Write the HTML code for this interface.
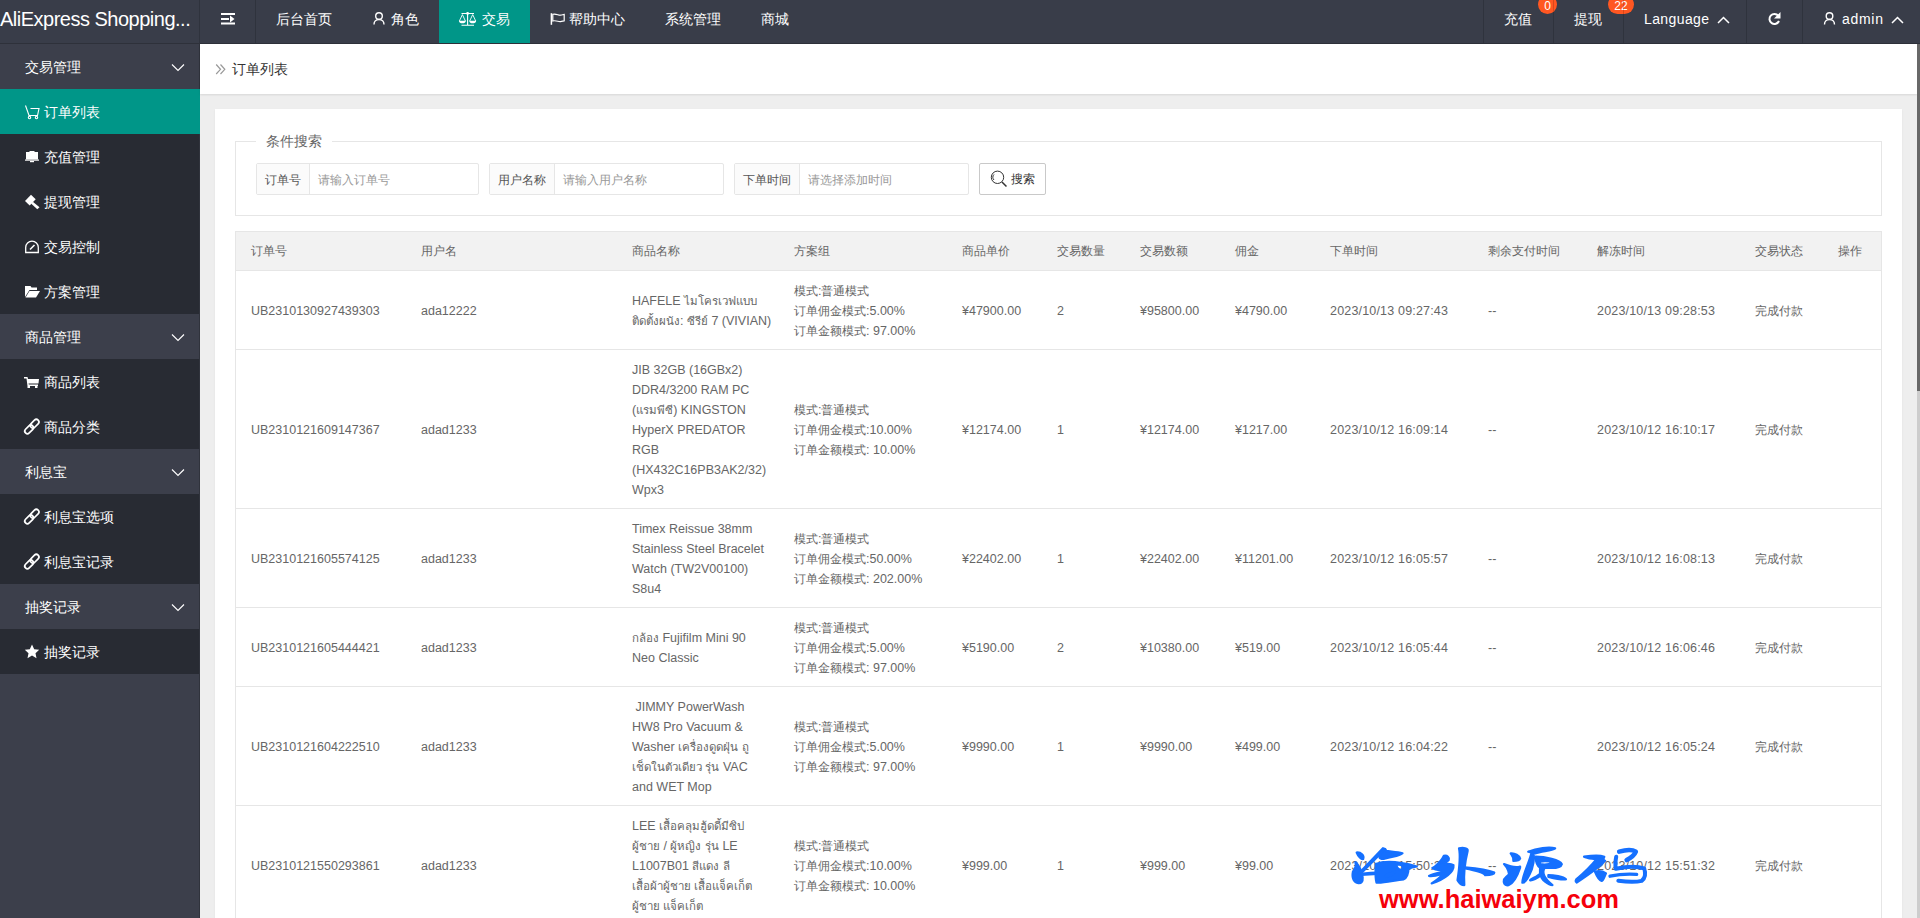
<!DOCTYPE html>
<html><head><meta charset="utf-8"><title>订单列表</title>
<style>
*{margin:0;padding:0;box-sizing:border-box}
html,body{width:1920px;height:918px;overflow:hidden;background:#eeeeee;font-family:"Liberation Sans",sans-serif;font-size:14px;color:#666;position:relative}
.a{position:absolute}
svg{position:absolute;overflow:visible}
.hd{position:absolute;left:0;top:0;width:1920px;height:44px;background:#393D49;border-bottom:1px solid #2e313a}
.logo{position:absolute;left:0;top:0;width:199px;height:43px;line-height:38px;font-size:20px;color:#fff;white-space:nowrap;overflow:hidden;letter-spacing:-0.5px}
.sep{position:absolute;top:0;width:1px;height:43px;background:rgba(0,0,0,.16)}
.it{position:absolute;top:0;height:43px;line-height:38px;white-space:nowrap;color:#fff;font-size:14px}
.act{position:absolute;left:439px;top:0;width:91px;height:43px;background:#009688}
.badge{position:absolute;top:-5px;height:19px;line-height:19px;border-radius:10px;background:#FF5722;color:#fff;font-size:12px;text-align:center;line-height:23px}
.side{position:absolute;left:0;top:44px;width:199px;height:874px;background:#3c3f4b}
.sline{position:absolute;left:199px;top:44px;width:1px;height:874px;background:#30333c}
.g,.s{position:absolute;left:0;width:199px;height:45px;line-height:46px;color:#fff;white-space:nowrap}
.g{padding-left:25px;background:#3c3f4b}
.s{padding-left:44px;background:#282B33}
.on{background:#009688;width:200px}
.bc{position:absolute;left:200px;top:44px;width:1717px;height:50px;background:#fff;box-shadow:0 1px 2px rgba(0,0,0,.10)}
.card{position:absolute;left:215px;top:109px;width:1687px;height:809px;background:#fff;box-shadow:0 1px 2px 0 rgba(0,0,0,.06)}
.fs{position:absolute;left:235px;top:141px;width:1647px;height:75px;border:1px solid #e6e6e6}
.lgbg{position:absolute;left:256px;top:132px;width:76px;height:18px;background:#fff}
.lg{position:absolute;left:266px;top:131px;line-height:20px;font-size:14px;color:#666;white-space:nowrap}
.ig{position:absolute;top:163px;height:32px;border:1px solid #e6e6e6;border-radius:2px;background:#fff}
.lb{position:absolute;left:0;top:0;height:30px;line-height:32px;background:#FBFBFB;border-right:1px solid #e6e6e6;color:#555;font-size:12px;text-align:center;white-space:nowrap}
.ph{position:absolute;top:0;height:30px;line-height:32px;color:#999;font-size:12px;white-space:nowrap}
.btn{position:absolute;left:979px;top:163px;width:67px;height:32px;border:1px solid #c9c9c9;border-radius:2px;background:#fff}
.btxt{position:absolute;left:1011px;top:170px;line-height:18px;font-size:12px;color:#333;white-space:nowrap}
.tframe{position:absolute;left:235px;top:231px;width:1647px;height:700px;border:1px solid #e6e6e6}
.thead{position:absolute;left:236px;top:232px;width:1645px;height:39px;background:#f2f2f2;border-bottom:1px solid #e6e6e6}
.th{position:absolute;top:241px;line-height:20px;font-size:12px;color:#666;white-space:nowrap}
.rowline{position:absolute;left:236px;width:1645px;height:1px;background:#e6e6e6}
.td{position:absolute;font-size:12.5px;color:#666;white-space:nowrap}
.td div{height:20px;line-height:20px}
.c{font-size:12px}
.sb{position:absolute;left:1917px;top:44px;width:3px;height:874px;background:#cdcdcd}
.sbt{position:absolute;left:1917px;top:44px;width:3px;height:347px;background:#686868}
.wm1{position:absolute;left:1349px;top:836px;font-size:46px;line-height:56px;color:#1a6cff;font-weight:bold;letter-spacing:32px;white-space:nowrap;transform:skewX(-12deg)}
.wm2{position:absolute;left:1379px;top:884px;font-size:25.5px;line-height:30px;color:#f5000a;font-weight:bold;white-space:nowrap}
.t{font-size:11.5px}
.dt{letter-spacing:0.18px}

</style></head><body>
<div class="hd"></div>
<div class="logo">AliExpress Shopping...</div>
<div class="sep" style="left:199px"></div>
<svg style="left:0;top:0" width="1" height="1"><g fill="#fff"><rect x="221" y="13" width="14" height="2"/><rect x="221" y="18" width="8" height="2"/><path d="M230 15.5 L234.5 19 L230 22.5Z"/><rect x="221" y="22.5" width="14" height="2"/></g></svg>
<div class="sep" style="left:255px"></div>
<div class="it" style="left:276px">后台首页</div>
<svg style="left:0;top:0" width="1" height="1"><g fill="none" stroke="#fff" stroke-width="1.4"><circle cx="379" cy="16" r="3.3"/><path d="M374 24.5 C374 21.5 376 19.6 379 19.6 C382 19.6 384 21.5 384 24.5"/></g></svg>
<div class="it" style="left:391px">角色</div>
<div class="act"></div>
<svg style="left:0;top:0" width="1" height="1"><g fill="none" stroke="#fff" stroke-width="1.1"><path d="M461.5 13.5 H474 M467.6 13.5 V25.3 M461.5 25.3 H474"/><path d="M462.4 14.6 L459.4 21 M462.4 14.6 L465.4 21 M472.7 14.6 L469.7 21 M472.7 14.6 L475.7 21" stroke-width="0.9"/></g><g fill="#fff"><path d="M458.9 20.7 H465.9 C465.7 22.6 464.3 23.3 462.4 23.3 C460.5 23.3 459.1 22.6 458.9 20.7Z M469.2 20.7 H476.2 C476 22.6 474.6 23.3 472.7 23.3 C470.8 23.3 469.4 22.6 469.2 20.7Z"/><circle cx="467.6" cy="13.4" r="1.4"/></g></svg>
<div class="it" style="left:482px">交易</div>
<svg style="left:0;top:0" width="1" height="1"><g fill="none" stroke="#fff"><path d="M551.4 13.2 V24.8" stroke-width="1.5"/><path d="M552.8 14.3 C556 13.2 558.5 15.6 560.5 15.2 C562 15 563 14.6 564.2 14.4 V20.8 C563 21 562 21.4 560.5 21.6 C558.5 22 556 20 552.8 21Z" stroke-width="1.2"/></g></svg>
<div class="it" style="left:569px">帮助中心</div>
<div class="it" style="left:665px">系统管理</div>
<div class="it" style="left:761px">商城</div>
<div class="sep" style="left:1483px"></div>
<div class="it" style="left:1504px">充值</div>
<div class="badge" style="left:1538px;width:19px">0</div>
<div class="sep" style="left:1553px"></div>
<div class="it" style="left:1574px">提现</div>
<div class="badge" style="left:1608px;width:26px">22</div>
<div class="sep" style="left:1623px"></div>
<div class="it" style="left:1644px;letter-spacing:0.4px">Language</div>
<svg style="left:0;top:0" width="1" height="1"><path d="M1718 23 L1723.5 17.5 L1729 23" fill="none" stroke="#fff" stroke-width="1.5"/></svg>
<div class="sep" style="left:1746px"></div>
<svg style="left:0;top:0" width="1" height="1"><path d="M1778.3 15.7 A5 5 0 1 0 1779 21" fill="none" stroke="#fff" stroke-width="2"/><path d="M1780.5 12 V18.5 H1774Z" fill="#fff"/></svg>
<div class="sep" style="left:1802px"></div>
<svg style="left:0;top:0" width="1" height="1"><g fill="none" stroke="#fff" stroke-width="1.4"><circle cx="1829.5" cy="16" r="3.3"/><path d="M1824.5 24.5 C1824.5 21.5 1826.5 19.6 1829.5 19.6 C1832.5 19.6 1834.5 21.5 1834.5 24.5"/></g></svg>
<div class="it" style="left:1842px;letter-spacing:0.7px">admin</div>
<svg style="left:0;top:0" width="1" height="1"><path d="M1892 23 L1897.5 17.5 L1903 23" fill="none" stroke="#fff" stroke-width="1.5"/></svg>

<div class="side"></div>
<div class="sline"></div>
<div class="g" style="top:44px">交易管理</div>
<div class="s on" style="top:89px">订单列表</div>
<div class="s" style="top:134px">充值管理</div>
<div class="s" style="top:179px">提现管理</div>
<div class="s" style="top:224px">交易控制</div>
<div class="s" style="top:269px">方案管理</div>
<div class="g" style="top:314px">商品管理</div>
<div class="s" style="top:359px">商品列表</div>
<div class="s" style="top:404px">商品分类</div>
<div class="g" style="top:449px">利息宝</div>
<div class="s" style="top:494px">利息宝选项</div>
<div class="s" style="top:539px">利息宝记录</div>
<div class="g" style="top:584px">抽奖记录</div>
<div class="s" style="top:629px">抽奖记录</div>
<svg style="left:0;top:0" width="1" height="1">
<g fill="none" stroke="#fff" stroke-width="1.15">
<path d="M172 64.5 L178 70.5 L184 64.5"/><path d="M172 334.5 L178 340.5 L184 334.5"/><path d="M172 469.5 L178 475.5 L184 469.5"/><path d="M172 604.5 L178 610.5 L184 604.5"/>
</g>
<g fill="none" stroke="#fff" stroke-width="1.1"><path d="M25.5 105.5 L29 115.5 H37.5 L39 108.5 H30.5"/><circle cx="29.5" cy="117.5" r="1.2"/><circle cx="36.5" cy="117.5" r="1.2"/></g>
<g fill="#fff"><path d="M26 152 H29.5 V151 H34.5 V152 H38 V159.5 H26Z"/><rect x="25" y="159.5" width="14" height="1.2"/><rect x="30" y="161" width="4" height="1.2"/></g>
<g fill="#fff"><path d="M31 194.7 L35.7 199.2 L29.7 205.4 L25 201Z"/><path d="M32.8 201.8 L39.5 207.2 L37.3 209.3 L31 203.6Z"/></g>
<g fill="none" stroke="#fff" stroke-width="1.3"><path d="M25.7 252.5 V247.5 A6.3 6.3 0 0 1 38.3 247.5 V252.5 Z"/><path d="M30 249.5 L34.5 245" stroke-width="1.6"/></g>
<g fill="#fff"><path d="M25 286 H30.5 L31.5 287.5 H37 V290 H29.5 L25 297Z"/><path d="M29.5 291 H40 L36 297.5 H25.5Z"/></g>
<g fill="#fff"><path d="M24 377 H27.5 L28 379 H39 L38.5 383.5 H28.5 L28.8 384.5 H38 V386 H27.5 L26.5 378.5 H24Z"/><rect x="27.5" y="386" width="2.5" height="2"/><rect x="35" y="386" width="2.5" height="2"/></g>
<g fill="none" stroke="#fff" stroke-width="1.7"><rect x="-2.6" y="-5" width="5.2" height="10" rx="2.6" transform="translate(34.6 423.7) rotate(45)"/><rect x="-2.6" y="-5" width="5.2" height="10" rx="2.6" transform="translate(29.1 429.4) rotate(45)"/></g>
<g fill="none" stroke="#fff" stroke-width="1.7"><rect x="-2.6" y="-5" width="5.2" height="10" rx="2.6" transform="translate(34.6 513.7) rotate(45)"/><rect x="-2.6" y="-5" width="5.2" height="10" rx="2.6" transform="translate(29.1 519.4) rotate(45)"/></g>
<g fill="none" stroke="#fff" stroke-width="1.7"><rect x="-2.6" y="-5" width="5.2" height="10" rx="2.6" transform="translate(34.6 558.7) rotate(45)"/><rect x="-2.6" y="-5" width="5.2" height="10" rx="2.6" transform="translate(29.1 564.4) rotate(45)"/></g>
<path fill="#fff" d="M32 644.5 L34.2 649.3 L39.2 649.8 L35.5 653.2 L36.5 658.2 L32 655.6 L27.5 658.2 L28.5 653.2 L24.8 649.8 L29.8 649.3Z"/>
</svg>

<div class="card"></div>
<div class="bc"></div>
<svg style="left:0;top:0" width="1" height="1"><g fill="none" stroke="#999" stroke-width="1.2"><path d="M216.2 64.5 L220.5 69.3 L216.2 74"/><path d="M220.5 64.5 L224.8 69.3 L220.5 74"/></g></svg>
<div class="a" style="left:232px;top:59px;line-height:20px;font-size:14px;color:#333;white-space:nowrap">订单列表</div>

<div class="fs"></div>
<div class="lgbg"></div>
<div class="lg">条件搜索</div>
<div class="ig" style="left:256px;width:223px"><div class="lb" style="width:53px">订单号</div><div class="ph" style="left:61px">请输入订单号</div></div>
<div class="ig" style="left:489px;width:235px"><div class="lb" style="width:65px">用户名称</div><div class="ph" style="left:73px">请输入用户名称</div></div>
<div class="ig" style="left:734px;width:235px"><div class="lb" style="width:65px">下单时间</div><div class="ph" style="left:73px">请选择添加时间</div></div>
<div class="btn"></div>
<svg style="left:0;top:0" width="1" height="1"><g fill="none" stroke="#333" stroke-width="1"><circle cx="997.5" cy="177.3" r="6.2"/><path d="M1002 182 L1006.5 186.5" stroke-width="1.5"/><path d="M994 174.5 A3.8 3.8 0 0 0 994 180"/></g></svg>
<div class="btxt">搜索</div>

<div class="sb"></div><div class="sbt"></div>

<div class="tframe"></div><div class="thead"></div><div class="th" style="left:251px">订单号</div><div class="th" style="left:421px">用户名</div><div class="th" style="left:632px">商品名称</div><div class="th" style="left:794px">方案组</div><div class="th" style="left:962px">商品单价</div><div class="th" style="left:1057px">交易数量</div><div class="th" style="left:1140px">交易数额</div><div class="th" style="left:1235px">佣金</div><div class="th" style="left:1330px">下单时间</div><div class="th" style="left:1488px">剩余支付时间</div><div class="th" style="left:1597px">解冻时间</div><div class="th" style="left:1755px">交易状态</div><div class="th" style="left:1838px">操作</div><div class="rowline" style="top:349px"></div><div class="td" style="left:251px;top:301px"><div>UB2310130927439303</div></div><div class="td" style="left:421px;top:301px"><div>ada12222</div></div><div class="td" style="left:632px;top:291px"><div>HAFELE <span class="t">ไมโครเวฟแบบ</span></div><div><span class="t">ติดตั้งผนัง</span>: <span class="t">ซีรีย์</span> 7 (VIVIAN)</div></div><div class="td" style="left:794px;top:281px"><div><span class="c">模式</span>:<span class="c">普通模式</span></div><div><span class="c">订单佣金模式</span>:5.00%</div><div><span class="c">订单金额模式</span>: 97.00%</div></div><div class="td" style="left:962px;top:301px"><div>¥47900.00</div></div><div class="td" style="left:1057px;top:301px"><div>2</div></div><div class="td" style="left:1140px;top:301px"><div>¥95800.00</div></div><div class="td" style="left:1235px;top:301px"><div>¥4790.00</div></div><div class="td" style="left:1330px;top:301px"><div class="dt">2023/10/13 09:27:43</div></div><div class="td" style="left:1488px;top:301px"><div>--</div></div><div class="td" style="left:1597px;top:301px"><div class="dt">2023/10/13 09:28:53</div></div><div class="td" style="left:1755px;top:301px"><div><span class="c">完成付款</span></div></div><div class="td" style="left:1838px;top:301px"><div></div></div><div class="rowline" style="top:508px"></div><div class="td" style="left:251px;top:420px"><div>UB2310121609147367</div></div><div class="td" style="left:421px;top:420px"><div>adad1233</div></div><div class="td" style="left:632px;top:360px"><div>JIB 32GB (16GBx2)</div><div>DDR4/3200 RAM PC</div><div>(<span class="t">แรมพีซี</span>) KINGSTON</div><div>HyperX PREDATOR</div><div>RGB</div><div>(HX432C16PB3AK2/32)</div><div>Wpx3</div></div><div class="td" style="left:794px;top:400px"><div><span class="c">模式</span>:<span class="c">普通模式</span></div><div><span class="c">订单佣金模式</span>:10.00%</div><div><span class="c">订单金额模式</span>: 10.00%</div></div><div class="td" style="left:962px;top:420px"><div>¥12174.00</div></div><div class="td" style="left:1057px;top:420px"><div>1</div></div><div class="td" style="left:1140px;top:420px"><div>¥12174.00</div></div><div class="td" style="left:1235px;top:420px"><div>¥1217.00</div></div><div class="td" style="left:1330px;top:420px"><div class="dt">2023/10/12 16:09:14</div></div><div class="td" style="left:1488px;top:420px"><div>--</div></div><div class="td" style="left:1597px;top:420px"><div class="dt">2023/10/12 16:10:17</div></div><div class="td" style="left:1755px;top:420px"><div><span class="c">完成付款</span></div></div><div class="td" style="left:1838px;top:420px"><div></div></div><div class="rowline" style="top:607px"></div><div class="td" style="left:251px;top:549px"><div>UB2310121605574125</div></div><div class="td" style="left:421px;top:549px"><div>adad1233</div></div><div class="td" style="left:632px;top:519px"><div>Timex Reissue 38mm</div><div>Stainless Steel Bracelet</div><div>Watch (TW2V00100)</div><div>S8u4</div></div><div class="td" style="left:794px;top:529px"><div><span class="c">模式</span>:<span class="c">普通模式</span></div><div><span class="c">订单佣金模式</span>:50.00%</div><div><span class="c">订单金额模式</span>: 202.00%</div></div><div class="td" style="left:962px;top:549px"><div>¥22402.00</div></div><div class="td" style="left:1057px;top:549px"><div>1</div></div><div class="td" style="left:1140px;top:549px"><div>¥22402.00</div></div><div class="td" style="left:1235px;top:549px"><div>¥11201.00</div></div><div class="td" style="left:1330px;top:549px"><div class="dt">2023/10/12 16:05:57</div></div><div class="td" style="left:1488px;top:549px"><div>--</div></div><div class="td" style="left:1597px;top:549px"><div class="dt">2023/10/12 16:08:13</div></div><div class="td" style="left:1755px;top:549px"><div><span class="c">完成付款</span></div></div><div class="td" style="left:1838px;top:549px"><div></div></div><div class="rowline" style="top:686px"></div><div class="td" style="left:251px;top:638px"><div>UB2310121605444421</div></div><div class="td" style="left:421px;top:638px"><div>adad1233</div></div><div class="td" style="left:632px;top:628px"><div><span class="t">กล้อง</span> Fujifilm Mini 90</div><div>Neo Classic</div></div><div class="td" style="left:794px;top:618px"><div><span class="c">模式</span>:<span class="c">普通模式</span></div><div><span class="c">订单佣金模式</span>:5.00%</div><div><span class="c">订单金额模式</span>: 97.00%</div></div><div class="td" style="left:962px;top:638px"><div>¥5190.00</div></div><div class="td" style="left:1057px;top:638px"><div>2</div></div><div class="td" style="left:1140px;top:638px"><div>¥10380.00</div></div><div class="td" style="left:1235px;top:638px"><div>¥519.00</div></div><div class="td" style="left:1330px;top:638px"><div class="dt">2023/10/12 16:05:44</div></div><div class="td" style="left:1488px;top:638px"><div>--</div></div><div class="td" style="left:1597px;top:638px"><div class="dt">2023/10/12 16:06:46</div></div><div class="td" style="left:1755px;top:638px"><div><span class="c">完成付款</span></div></div><div class="td" style="left:1838px;top:638px"><div></div></div><div class="rowline" style="top:805px"></div><div class="td" style="left:251px;top:737px"><div>UB2310121604222510</div></div><div class="td" style="left:421px;top:737px"><div>adad1233</div></div><div class="td" style="left:632px;top:697px"><div>&nbsp;JIMMY PowerWash</div><div>HW8 Pro Vacuum &amp;</div><div>Washer <span class="t">เครื่องดูดฝุ่น</span> <span class="t">ถู</span></div><div><span class="t">เช็ดในตัวเดียว</span> <span class="t">รุ่น</span> VAC</div><div>and WET Mop</div></div><div class="td" style="left:794px;top:717px"><div><span class="c">模式</span>:<span class="c">普通模式</span></div><div><span class="c">订单佣金模式</span>:5.00%</div><div><span class="c">订单金额模式</span>: 97.00%</div></div><div class="td" style="left:962px;top:737px"><div>¥9990.00</div></div><div class="td" style="left:1057px;top:737px"><div>1</div></div><div class="td" style="left:1140px;top:737px"><div>¥9990.00</div></div><div class="td" style="left:1235px;top:737px"><div>¥499.00</div></div><div class="td" style="left:1330px;top:737px"><div class="dt">2023/10/12 16:04:22</div></div><div class="td" style="left:1488px;top:737px"><div>--</div></div><div class="td" style="left:1597px;top:737px"><div class="dt">2023/10/12 16:05:24</div></div><div class="td" style="left:1755px;top:737px"><div><span class="c">完成付款</span></div></div><div class="td" style="left:1838px;top:737px"><div></div></div><div class="rowline" style="top:924px"></div><div class="td" style="left:251px;top:856px"><div>UB2310121550293861</div></div><div class="td" style="left:421px;top:856px"><div>adad1233</div></div><div class="td" style="left:632px;top:816px"><div>LEE <span class="t">เสื้อคลุมฮู้ดดี้มีซิป</span></div><div><span class="t">ผู้ชาย</span> / <span class="t">ผู้หญิง</span> <span class="t">รุ่น</span> LE</div><div>L1007B01 <span class="t">สีแดง</span> <span class="t">ลี</span></div><div><span class="t">เสื้อผ้าผู้ชาย</span> <span class="t">เสื้อแจ็คเก็ต</span></div><div><span class="t">ผู้ชาย</span> <span class="t">แจ็คเก็ต</span></div></div><div class="td" style="left:794px;top:836px"><div><span class="c">模式</span>:<span class="c">普通模式</span></div><div><span class="c">订单佣金模式</span>:10.00%</div><div><span class="c">订单金额模式</span>: 10.00%</div></div><div class="td" style="left:962px;top:856px"><div>¥999.00</div></div><div class="td" style="left:1057px;top:856px"><div>1</div></div><div class="td" style="left:1140px;top:856px"><div>¥999.00</div></div><div class="td" style="left:1235px;top:856px"><div>¥99.00</div></div><div class="td" style="left:1330px;top:856px"><div class="dt">2023/10/12 15:50:29</div></div><div class="td" style="left:1488px;top:856px"><div>--</div></div><div class="td" style="left:1597px;top:856px"><div class="dt">2023/10/12 15:51:32</div></div><div class="td" style="left:1755px;top:856px"><div><span class="c">完成付款</span></div></div><div class="td" style="left:1838px;top:856px"><div></div></div>
<svg style="left:0;top:0" width="1" height="1"><g fill="#1570ff" fill-rule="evenodd" stroke="#1570ff" stroke-width="26" stroke-linejoin="round">
<g transform="translate(1345 840) scale(0.08333)">
<path d="M140 150 C190 145 235 185 218 228 C195 235 160 200 140 150Z"/>
<path d="M95 380 C125 340 135 300 125 265 C170 300 205 390 212 450 C216 500 195 522 160 518 C110 512 78 460 95 380Z"/>
<path d="M168 398 L455 98 L482 108 L192 402Z"/>
<path d="M195 405 C280 395 380 390 480 385 L478 402 C380 410 280 415 198 418Z"/>
<path d="M412 205 C440 120 500 95 490 130 C560 140 630 140 690 160 C650 200 560 195 485 222 C440 235 412 225 412 205Z"/>
<path d="M368 288 C470 250 640 255 862 318 C800 332 772 332 762 342 C762 400 742 462 702 472 C600 482 450 522 378 512 C358 450 368 350 368 288Z M482 432 C522 402 562 392 602 382 C582 422 522 442 482 432Z M618 300 C660 288 702 300 690 352 C660 362 620 342 618 300Z"/>
<path d="M1185 190 C1230 180 1255 210 1245 240 C1215 275 1140 305 1060 335 C1110 290 1160 250 1185 190Z"/>
<path d="M1048 335 C1120 300 1250 262 1302 302 C1312 382 1200 472 1040 522 C1100 482 1150 442 1182 405 C1120 422 1060 442 1008 432 C1060 402 1150 388 1192 378 C1202 352 1100 378 1048 335Z"/>
<path d="M1368 100 C1420 88 1482 98 1472 132 C1442 252 1422 402 1432 542 C1402 542 1372 522 1350 482 C1370 352 1390 202 1368 100Z"/>
<path d="M1440 328 C1560 338 1700 350 1792 390 C1792 412 1722 422 1682 422 C1672 402 1600 372 1440 342Z"/>
</g>
<g transform="translate(1495 840) scale(0.08333)">
<path d="M188 160 C240 155 292 188 302 222 C292 252 242 252 220 252 C230 212 210 192 188 160Z"/>
<path d="M108 288 C180 318 250 338 302 318 C262 378 202 428 162 442 C182 402 150 332 108 288Z"/>
<path d="M108 472 C160 402 240 372 302 332 C272 422 222 522 162 542 C110 552 98 512 108 472Z"/>
<path d="M398 140 C500 100 650 78 722 100 C682 132 560 132 482 162Z"/>
<path d="M438 150 C482 160 472 252 442 352 C402 452 362 522 328 512 C328 422 420 252 438 150Z"/>
<path d="M488 200 C600 200 782 240 802 290 C792 332 702 342 600 332 C560 382 580 452 690 542 C640 542 550 472 550 422 C520 452 440 492 420 482 C440 462 520 432 540 402 L540 332 C500 302 488 252 488 200Z M540 260 C580 250 640 250 700 270 C660 290 590 300 540 290Z"/>
<path d="M640 420 C700 420 822 440 852 470 C822 482 762 472 640 442Z"/>
<path d="M1068 200 C1150 188 1250 178 1312 200 C1302 242 1250 252 1200 232 C1150 222 1100 216 1068 200Z"/>
<path d="M1218 230 C1262 240 1302 220 1322 250 C1250 332 1100 432 980 512 C958 500 968 470 990 460 C1080 382 1160 302 1218 230Z"/>
<path d="M1198 378 C1250 368 1302 378 1332 400 C1312 442 1302 492 1280 492 C1240 482 1220 432 1198 378Z"/>
<g fill="none" stroke="#1570ff" stroke-linecap="round" stroke-linejoin="round"><path d="M1490 140 C1560 120 1650 115 1690 140 C1670 190 1620 220 1580 240" stroke-width="55"/><path d="M1455 200 C1445 250 1440 300 1450 345 C1560 320 1700 310 1790 340 C1810 400 1800 460 1760 490 C1680 510 1560 500 1480 490" stroke-width="48"/><path d="M1380 435 C1480 412 1600 405 1700 412" stroke-width="40"/></g></g></g></svg>
<div class="wm2">www.haiwaiym.com</div>

</body></html>
